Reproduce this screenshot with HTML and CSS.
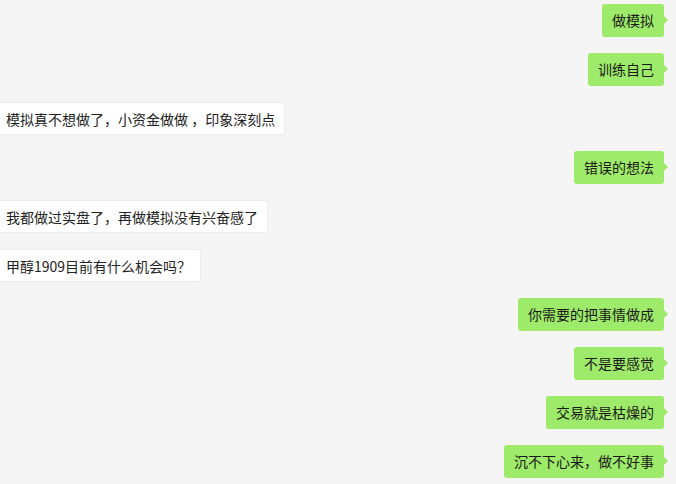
FILE: index.html
```html
<!DOCTYPE html>
<html>
<head>
  <meta charset="utf-8">
  <title>聊天记录</title>
  <link rel="stylesheet" href="styles.css">
</head>
<body>
  <div class="chat">
    <div class="row me"><div class="bubble">做模拟</div></div>
    <div class="row me"><div class="bubble">训练自己</div></div>
    <div class="row other"><div class="bubble">模拟真不想做了，小资金做做 ，印象深刻点</div></div>
    <div class="row me"><div class="bubble">错误的想法</div></div>
    <div class="row other"><div class="bubble">我都做过实盘了，再做模拟没有兴奋感了</div></div>
    <div class="row other"><div class="bubble">甲醇1909目前有什么机会吗？</div></div>
    <div class="row me"><div class="bubble">你需要的把事情做成</div></div>
    <div class="row me"><div class="bubble">不是要感觉</div></div>
    <div class="row me"><div class="bubble">交易就是枯燥的</div></div>
    <div class="row me"><div class="bubble">沉不下心来，做不好事</div></div>
  </div>
</body>
</html>
```

FILE: styles.css
```css
body {
  margin: 0;
  background: #f5f5f5;
  font-family: "Noto Sans CJK SC", "Noto Sans", sans-serif;
  font-size: 14px;
  overflow: hidden;
}
.chat {
  display: flex;
  flex-direction: column;
  gap: 16px;
  padding: 4px 12px 0 0;
}
.row {
  display: flex;
}
.row.me {
  justify-content: flex-end;
}
.row.other {
  justify-content: flex-start;
  margin-left: -4px;
}
.bubble {
  position: relative;
  height: 33px;
  box-sizing: border-box;
  padding: 0 10px;
  line-height: 33px;
  border-radius: 3px;
  white-space: nowrap;
}
.me .bubble {
  background: #9eea6a;
  color: #1a1a1a;
}
.me .bubble:after {
  content: "";
  position: absolute;
  right: -4px;
  top: 12px;
  border-left: 4px solid #9eea6a;
  border-top: 4px solid transparent;
  border-bottom: 4px solid transparent;
}
.other .bubble {
  background: #ffffff;
  color: #222;
  border: 1px solid #ececec;
  padding: 0 9px;
}
```
